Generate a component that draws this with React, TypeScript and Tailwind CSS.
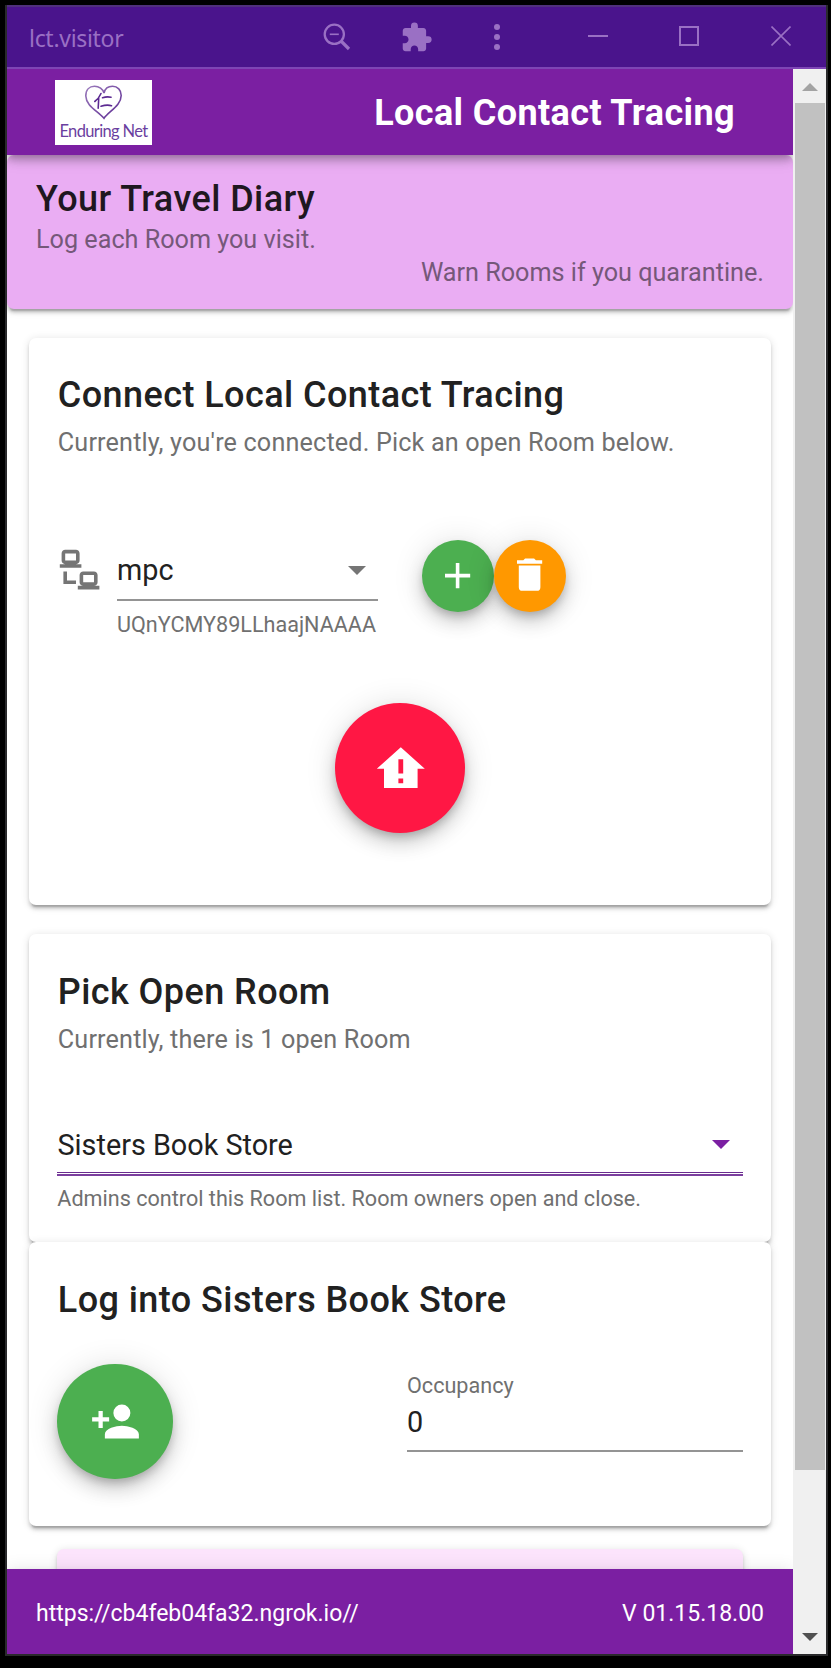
import type { ReactNode } from "react";

const ICONS = {
  lan: "M4,1C2.89,1 2,1.89 2,3V7C2,8.11 2.89,9 4,9H1V11H13V9H10C11.11,9 12,8.11 12,7V3C12,1.89 11.11,1 10,1H4M4,3H10V7H4V3M3,13V18L3,20H10V18H5V13H3M14,13C12.89,13 12,13.89 12,15V19C12,20.11 12.89,21 14,21H11V23H23V21H20C21.11,21 22,20.11 22,19V15C22,13.89 21.11,13 20,13H14M14,15H20V19H14V15Z",
  plus: "M19,13H13V19H11V13H5V11H11V5H13V11H19V13Z",
  trash: "M19,4H15.5L14.5,3H9.5L8.5,4H5V6H19V4M6,19A2,2 0 0,0 8,21H16A2,2 0 0,0 18,19V7H6V19Z",
  homeAlert: "M12,3L2,12H5V20H19V12H22L12,3M11,8H13V14H11V8M11,16H13V18H11V16Z",
  accountPlus:
    "M15,14C12.33,14 7,15.33 7,18V20H23V18C23,15.33 17.67,14 15,14M6,10V7H4V10H1V12H4V15H6V12H9V10M15,12A4,4 0 0,0 19,8A4,4 0 0,0 15,4A4,4 0 0,0 11,8A4,4 0 0,0 15,12Z",
  puzzle:
    "M20.5 11H19V7c0-1.1-.9-2-2-2h-4V3.5a2.5 2.5 0 0 0-5 0V5H4c-1.1 0-1.99.9-1.99 2v3.8H3.5c1.49 0 2.7 1.21 2.7 2.7s-1.21 2.7-2.7 2.7H2V20c0 1.1.9 2 2 2h3.8v-1.5c0-1.49 1.21-2.7 2.7-2.7s2.7 1.21 2.7 2.7V22H17c1.1 0 2-.9 2-2v-4h1.5a2.5 2.5 0 0 0 0-5z",
};

function Icon({ path, className }: { path: string; className: string }) {
  return (
    <svg viewBox="0 0 24 24" className={`shrink-0 ${className}`} fill="currentColor">
      <path d={path} />
    </svg>
  );
}

function Caret({ className }: { className: string }) {
  return (
    <svg viewBox="0 0 18 9" className={`h-[9px] w-[18px] shrink-0 ${className}`} fill="currentColor">
      <path d="M0 0H18L9 9Z" />
    </svg>
  );
}

function Fab({ className, children }: { className: string; children: ReactNode }) {
  return (
    <button
      className={`flex shrink-0 items-center justify-center rounded-full text-white shadow-[0_5.4px_9px_-1.8px_rgba(0,0,0,0.2),0_10.8px_18px_0_rgba(0,0,0,0.14),0_1.8px_32.4px_0_rgba(0,0,0,0.12)] ${className}`}
    >
      {children}
    </button>
  );
}

function Card({ className, children }: { className: string; children?: ReactNode }) {
  return (
    <section
      className={`shrink-0 rounded-[7px] shadow-[0_5.4px_1.8px_-3.6px_rgba(0,0,0,0.2),0_3.6px_3.6px_0_rgba(0,0,0,0.14),0_1.8px_9px_0_rgba(0,0,0,0.12)] ${className}`}
    >
      {children}
    </section>
  );
}

function Title({ children }: { children: ReactNode }) {
  return (
    <h2 className="pl-[0.8px] text-[36px] leading-[40px] font-medium tracking-[0.43px] text-[#212121]">{children}</h2>
  );
}

function TitleBar() {
  return (
    <div className="flex h-[64px] shrink-0 border-t-2 border-b-2 border-t-[#50307b] border-b-[#7e45b5] bg-[#4a148c] text-[#9a70c4]">
      <span className="mt-[13px] ml-[22px] w-[290px] font-['Noto_Sans'] text-[23px] leading-[36px] tracking-[-0.3px]">
        lct.visitor
      </span>
      <svg viewBox="0 0 36 36" className="mt-[12px] h-[36px] w-[36px]" fill="none" stroke="currentColor">
        <circle cx="15.3" cy="15.3" r="9.6" strokeWidth="2.3" />
        <path d="M10.8 15.3H19.8" strokeWidth="1.6" />
        <path d="M22 22L30 30" strokeWidth="3.2" />
      </svg>
      <Icon path={ICONS.puzzle} className="mt-[14px] ml-[45px] h-[33px] w-[33px]" />
      <svg viewBox="0 0 6 26" className="mt-[17px] ml-[61px] h-[26px] w-[6px]" fill="currentColor">
        <circle cx="3" cy="3" r="3" />
        <circle cx="3" cy="13" r="3" />
        <circle cx="3" cy="23" r="3" />
      </svg>
      <svg viewBox="0 0 20 20" className="mt-[19px] ml-[88px] h-[20px] w-[20px]" stroke="currentColor" strokeWidth="2">
        <path d="M0 10H20" />
      </svg>
      <svg viewBox="0 0 20 20" className="mt-[19px] ml-[71px] h-[20px] w-[20px]" stroke="currentColor" strokeWidth="2" fill="none">
        <path d="M1 1H19V19H1Z" />
      </svg>
      <svg viewBox="0 0 20 20" className="mt-[19px] ml-[72px] h-[20px] w-[20px]" stroke="currentColor" strokeWidth="1.6">
        <path d="M0.5 0.5L19.5 19.5M19.5 0.5L0.5 19.5" />
      </svg>
    </div>
  );
}

function Logo() {
  return (
    <div className="flex h-[65px] w-[97px] flex-col items-center bg-white">
      <svg viewBox="30 5 38 35" className="mt-[5px] h-[35px] w-[38px] shrink-0">
        <defs>
          <linearGradient id="heart" x1="0" y1="0" x2="1" y2="1">
            <stop offset="0" stopColor="#9a7abb" />
            <stop offset="1" stopColor="#5c2a92" />
          </linearGradient>
        </defs>
        <path
          d="M49 38.3C43 31 31 26 30.8 16C30.8 9.5 34.5 6.3 39.5 6.3C44 6.3 48 9 49 13C50 8.5 53.5 6.3 57.5 6.3C62.5 6.3 66.3 10 66.2 15.5C66 26 54 31 49 38.3Z"
          fill="none"
          stroke="url(#heart)"
          strokeWidth="1.6"
        />
        <path
          d="M46 13.5C44.5 17 42.5 19.5 39.8 21.5M43.7 18.5L43.2 28.3M47.5 17.8Q52 16.2 56 17.3M46 26.3Q52 24.3 56.5 25.7"
          fill="none"
          stroke="#5c2a92"
          strokeWidth="1.6"
          strokeLinecap="round"
        />
      </svg>
      <span className="font-[Lato] text-[16.5px] leading-[22px] tracking-[-0.65px] whitespace-nowrap text-[#6b3fa0]">
        Enduring Net
      </span>
    </div>
  );
}

function Scrollbar() {
  return (
    <div className="flex w-[33px] shrink-0 flex-col items-center bg-[#f0f0f0]">
      <svg viewBox="0 0 16 8" className="mt-[14px] h-[8px] w-[16px] shrink-0" fill="#a3a3a3">
        <path d="M0 8L8 0L16 8Z" />
      </svg>
      <div className="mt-[12px] ml-[1px] h-[1367px] w-[30px] shrink-0 bg-[#c1c1c1]" />
      <svg viewBox="0 0 16 8" className="mt-[163px] h-[8px] w-[16px] shrink-0" fill="#505050">
        <path d="M0 0L8 8L16 0Z" />
      </svg>
    </div>
  );
}

export default function App() {
  return (
    <div className="h-[1668px] w-[831px] overflow-hidden bg-black pt-[5px] pl-[5px] font-[Roboto,sans-serif]">
      <div className="flex h-[1651px] w-[823px] flex-col border-r-2 border-b-2 border-l-2 border-[#2a2a2c]">
        <TitleBar />
        <div className="flex min-h-0 flex-1">
          <div className="flex w-[786px] shrink-0 flex-col overflow-hidden bg-white">
            <header className="z-10 flex h-[86px] shrink-0 items-start justify-between bg-[#7b1fa2] pr-[58px] pl-[48px] shadow-[0_3.6px_7.2px_-1.8px_rgba(0,0,0,0.2),0_7.2px_9px_0_rgba(0,0,0,0.14),0_1.8px_18px_0_rgba(0,0,0,0.12)]">
              <div className="pt-[11px]">
                <Logo />
              </div>
              <h1 className="mt-[24px] text-[36px] leading-[40px] font-bold tracking-[0.38px] text-white">
                Local Contact Tracing
              </h1>
            </header>

            <main className="flex min-h-0 flex-1 flex-col overflow-hidden">
              <Card className="h-[154px] bg-[#eaadf3] px-[29px] pt-[24px]">
                <h2 className="text-[36px] leading-[40px] font-medium tracking-[0.42px] text-[#1f1720]">
                  Your Travel Diary
                </h2>
                <p className="mt-[4px] text-[25.2px] leading-[34px] text-[#755879]">Log each Room you visit.</p>
                <p className="text-right text-[25.2px] leading-[32px] text-[#755879]">Warn Rooms if you quarantine.</p>
              </Card>

              <Card className="mx-[22px] mt-[29px] h-[567px] bg-white px-[28px] pt-[37px]">
                <Title>Connect Local Contact Tracing</Title>
                <p className="mt-[11px] pl-[0.8px] text-[25.2px] leading-[33px] tracking-[0.16px] text-[#707070]">
                  Currently, you're connected. Pick an open Room below.
                </p>
                <div className="mt-[81px] flex h-[96px] items-start">
                  <Icon path={ICONS.lan} className="mt-[8px] ml-[0.5px] h-[43.2px] w-[43.2px] text-[#757575]" />
                  <div className="mt-[12px] ml-[16.3px] w-[261px]">
                    <div className="flex items-start justify-between border-b-2 border-[#949494] pr-[12px] pb-[11px]">
                      <span className="text-[28.8px] leading-[36px] text-[#212121]">mpc</span>
                      <Caret className="mt-[14px] text-[#757575]" />
                    </div>
                    <p className="mt-[12px] text-[21.6px] leading-[24px] text-[#707070]">UQnYCMY89LLhaajNAAAA</p>
                  </div>
                  <Fab className="ml-[44px] h-[72px] w-[72px] bg-[#4caf50] pr-[1.6px] pb-[1.6px]">
                    <Icon path={ICONS.plus} className="h-[43.2px] w-[43.2px]" />
                  </Fab>
                  <Fab className="h-[72px] w-[72px] bg-[#ff9800] pr-[1.6px] pb-[2.6px]">
                    <Icon path={ICONS.trash} className="h-[43.2px] w-[43.2px]" />
                  </Fab>
                </div>
                <div className="mt-[67px] flex justify-center">
                  <Fab className="h-[130px] w-[130px] bg-[#ff1744] pt-[0.8px] pl-[0.8px]">
                    <Icon path={ICONS.homeAlert} className="h-[57.6px] w-[57.6px]" />
                  </Fab>
                </div>
              </Card>

              <Card className="mx-[22px] mt-[29px] h-[308px] bg-white px-[28px] pt-[38px]">
                <Title>Pick Open Room</Title>
                <p className="mt-[11px] pl-[0.8px] text-[25.2px] leading-[33px] tracking-[0.16px] text-[#707070]">
                  Currently, there is 1 open Room
                </p>
                <div className="mt-[71px] flex items-start justify-between pr-[13px]">
                  <span className="pl-[0.5px] text-[28.8px] leading-[36px] text-[#212121]">Sisters Book Store</span>
                  <Caret className="mt-[13px] text-[#7b1fa2]" />
                </div>
                <div className="mt-[9px] h-[4px] border-t border-b-2 border-t-[#6a2c8e] border-b-[#7b3f9e]" />
                <p className="mt-[11px] pl-[0.3px] text-[21.6px] leading-[24px] text-[#707070]">
                  Admins control this Room list. Room owners open and close.
                </p>
              </Card>

              <Card className="mx-[22px] h-[284px] bg-white px-[28px] pt-[38px]">
                <Title>Log into Sisters Book Store</Title>
                <div className="mt-[44px] flex items-start justify-between">
                  <Fab className="h-[115px] w-[116px] bg-[#4caf50]">
                    <Icon path={ICONS.accountPlus} className="h-[51px] w-[51px]" />
                  </Fab>
                  <div className="mt-[10px] w-[336px] border-b-2 border-[#949494] pb-[10px]">
                    <p className="text-[21.6px] leading-[24px] text-[#707070]">Occupancy</p>
                    <p className="mt-[6px] text-[28.8px] leading-[36px] text-[#212121]">0</p>
                  </div>
                </div>
              </Card>

              <Card className="mx-[50px] mt-[23px] h-[120px] bg-[#fce4fc]" />
            </main>

            <footer className="z-10 flex h-[85px] shrink-0 items-center justify-between bg-[#7b1fa2] px-[29px] text-[23px] leading-[32px] text-white shadow-[0_3.6px_7.2px_-1.8px_rgba(0,0,0,0.2),0_7.2px_9px_0_rgba(0,0,0,0.14),0_1.8px_18px_0_rgba(0,0,0,0.12)]">
              <span className="pt-[4px]">https://cb4feb04fa32.ngrok.io//</span>
              <span className="pt-[4px]">V 01.15.18.00</span>
            </footer>
          </div>
          <Scrollbar />
        </div>
      </div>
    </div>
  );
}
